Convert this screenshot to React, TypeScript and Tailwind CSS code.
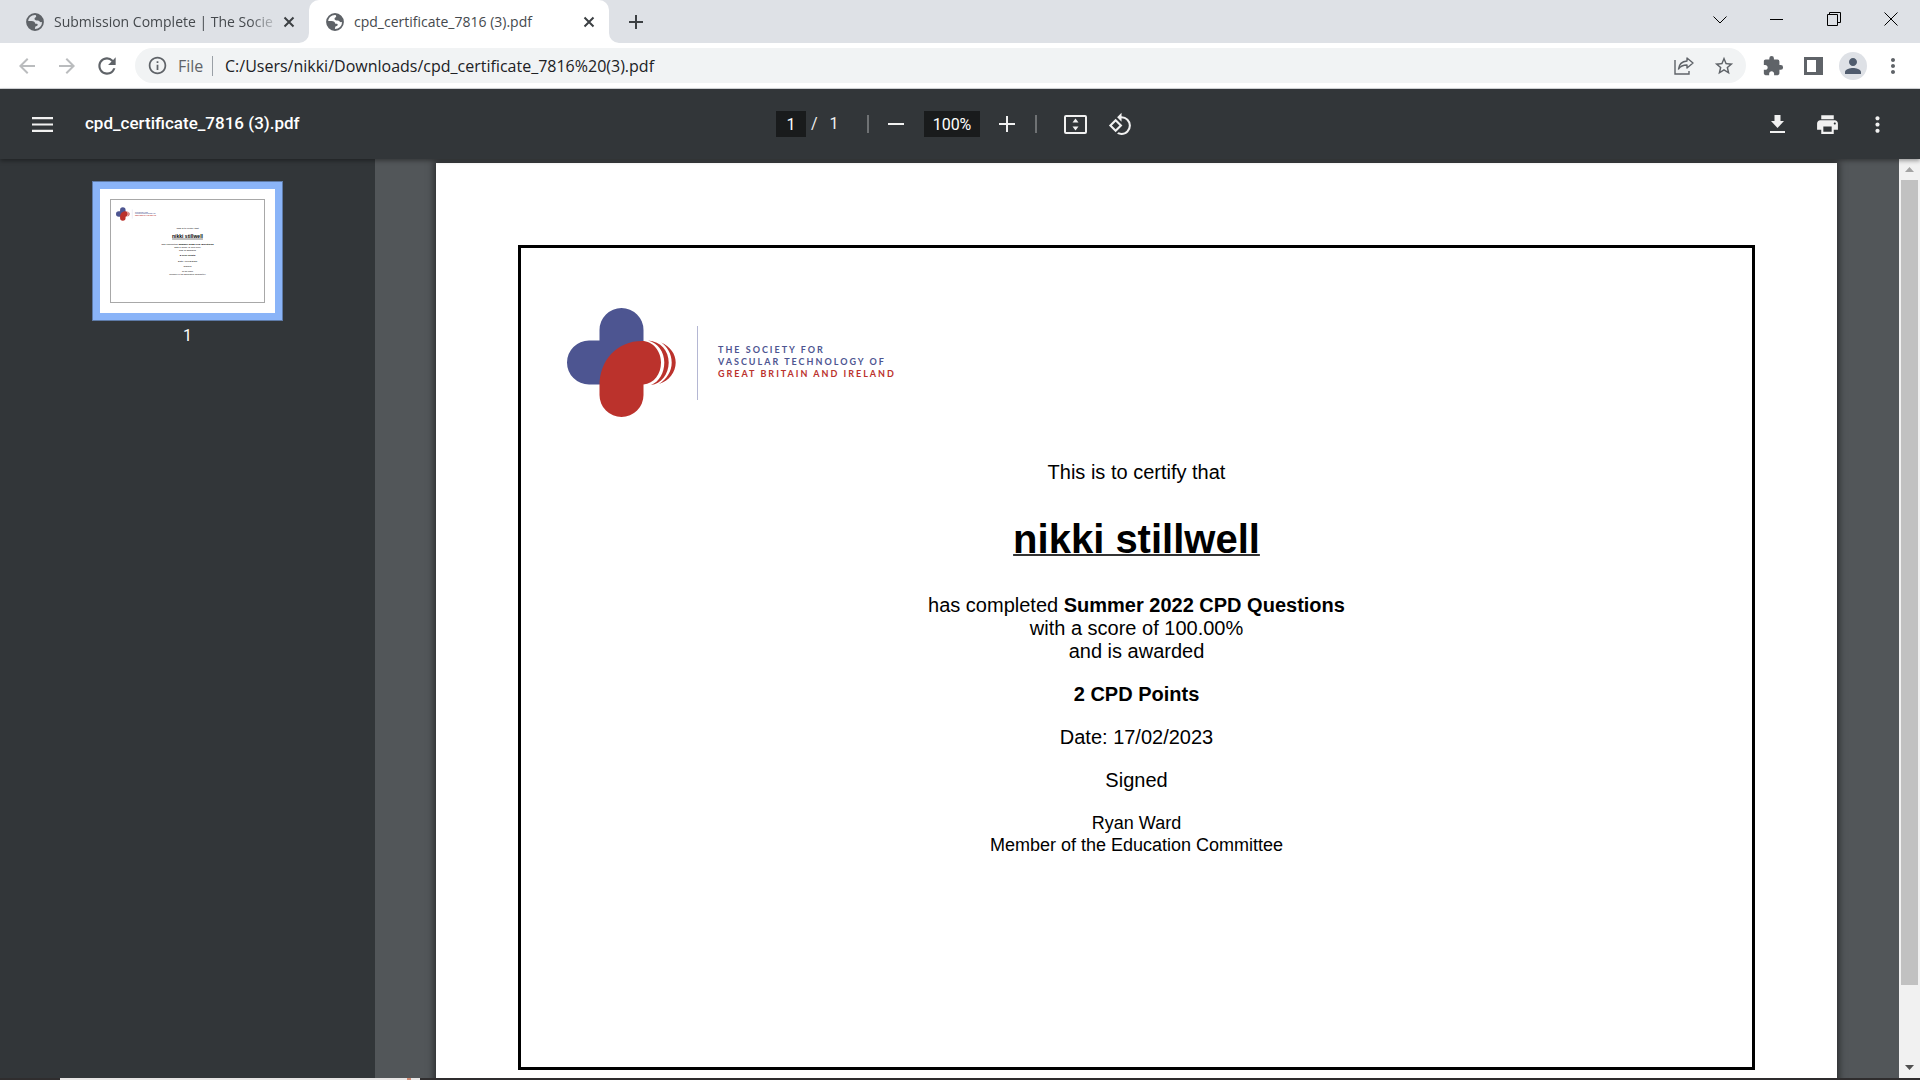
import type { ReactNode } from "react";
import {
  MdArrowBack,
  MdArrowForward,
  MdExtension,
  MdInfoOutline,
  MdMoreVert,
  MdPerson,
  MdPrint,
  MdRefresh,
  MdRotate90DegreesCcw,
  MdStarBorder,
} from "react-icons/md";

const tabs = [
  { title: "Submission Complete | The Socie", active: false },
  { title: "cpd_certificate_7816 (3).pdf", active: true },
];

const fileName = "cpd_certificate_7816 (3).pdf";

function IconButton({
  label,
  className = "",
  children,
}: {
  label: string;
  className?: string;
  children: ReactNode;
}) {
  return (
    <button
      type="button"
      aria-label={label}
      className={`flex h-9 w-9 shrink-0 items-center justify-center ${className}`}
    >
      {children}
    </button>
  );
}

/* ---------- Window frame ---------- */

function GlobeIcon() {
  return (
    <svg className="shrink-0" width="18" height="18" viewBox="0 0 18 18">
      <circle cx="9" cy="9" r="8" fill="none" stroke="#5f6368" strokeWidth="1.800" />
      <path
        fill="#5f6368"
        d="M9.500 1C14 1 17 4.500 17 8.500c-1.500 1-3 .8-3.600-.2-.6-1-1.800-.8-2.800-.8-1.300 0-2.400-.9-2-2.200.3-1 1.400-.8 1.600-1.800C10.300 2.600 9.500 2 9.500 1zM1 8h4.500c2.200 0 3.800 1.200 3.800 2.800h1.600c1 0 1 1.400.3 2-.6.500-1.800.4-2 1.200-.2 1-.2 2-.6 3C4.500 17 1 13.500 1 8z"
      />
    </svg>
  );
}

function CloseIcon() {
  return (
    <svg width="12" height="12" viewBox="0 0 12 12" stroke="#3c4043" strokeWidth="2">
      <path d="M1.500 1.500l9 9M10.500 1.500l-9 9" />
    </svg>
  );
}

function Tab({ title, active }: { title: string; active: boolean }) {
  return (
    <div
      role="tab"
      aria-selected={active}
      className={`relative flex h-full w-[300px] items-center pl-[17px] ${
        active ? "rounded-t-[10px] bg-white pr-3" : "pr-3"
      }`}
    >
      {active && (
        <>
          <svg className="absolute bottom-0 -left-2.5" width="10" height="10" viewBox="0 0 10 10" fill="#fff">
            <path d="M10 0v10H0A10 10 0 0 0 10 0z" />
          </svg>
          <svg className="absolute -right-2.5 bottom-0" width="10" height="10" viewBox="0 0 10 10" fill="#fff">
            <path d="M0 0v10h10A10 10 0 0 1 0 0z" />
          </svg>
        </>
      )}
      <GlobeIcon />
      <span
        className={`ml-2.5 min-w-0 flex-1 whitespace-nowrap text-sm text-[#45494d] ${
          active ? "" : "[mask-image:linear-gradient(to_right,black_86%,transparent)]"
        }`}
      >
        {title}
      </span>
      <button type="button" aria-label="Close tab" className="p-0.5">
        <CloseIcon />
      </button>
    </div>
  );
}

function TabStrip() {
  return (
    <div className="flex h-[43px] shrink-0 items-center bg-[#dee1e6]">
      <div role="tablist" className="flex h-full pl-[9px]">
        {tabs.map((tab) => (
          <Tab key={tab.title} {...tab} />
        ))}
      </div>
      <IconButton label="New tab" className="ml-[9px]">
        <svg width="16" height="16" viewBox="0 0 16 16" stroke="#3c4043" strokeWidth="2">
          <path d="M8 1v14M1 8h14" />
        </svg>
      </IconButton>
      <div className="ml-auto flex items-center pr-px pb-1.5 text-black">
        <button type="button" aria-label="Search tabs" className="flex w-[57px] justify-center">
          <svg width="14" height="14" viewBox="0 0 14 14" fill="none" stroke="currentColor">
            <path d="M.5 4.500L7 11l6.500-6.500" />
          </svg>
        </button>
        <button type="button" aria-label="Minimize" className="flex w-[57px] justify-center">
          <svg width="14" height="14" viewBox="0 0 14 14" fill="none" stroke="currentColor">
            <path d="M0 7.500h13" />
          </svg>
        </button>
        <button type="button" aria-label="Restore" className="flex w-[57px] justify-center">
          <svg width="14" height="14" viewBox="0 0 14 14" fill="none" stroke="currentColor">
            <path d="M.5 2.500h10v11H.5zM2.500 2.500v-2h11v10h-3" />
          </svg>
        </button>
        <button type="button" aria-label="Close" className="flex w-[57px] justify-center">
          <svg width="14" height="14" viewBox="0 0 14 14" fill="none" stroke="currentColor">
            <path d="M.5 .5l13 13M13.500 .5l-13 13" />
          </svg>
        </button>
      </div>
    </div>
  );
}

function AddressBar() {
  return (
    <div className="flex h-[46px] shrink-0 items-center border-b border-[#d5d7da] bg-white px-[9px] text-[#5f6368]">
      <IconButton label="Back" className="text-[#babcbe]">
        <MdArrowBack size={24} />
      </IconButton>
      <IconButton label="Forward" className="ml-1 text-[#babcbe]">
        <MdArrowForward size={24} />
      </IconButton>
      <IconButton label="Reload" className="ml-1">
        <MdRefresh size={26} />
      </IconButton>
      <div className="ml-2.5 flex h-[35px] flex-1 items-center rounded-full bg-[#f1f3f4] pr-1 pl-3">
        <MdInfoOutline size={21} />
        <span className="ml-2.5 w-[25px] text-base">File</span>
        <span className="ml-[9px] h-5 w-px bg-[#9aa0a6]" />
        <input
          aria-label="Address"
          defaultValue="C:/Users/nikki/Downloads/cpd_certificate_7816%20(3).pdf"
          className="ml-3 min-w-0 flex-1 bg-transparent text-base text-[#202124] outline-none"
        />
        <IconButton label="Share">
          <svg width="20" height="18" viewBox="0 0 20 18" fill="none" stroke="currentColor" strokeWidth="1.400">
            <path d="M1 3v14h14v-3" />
            <path d="M13 1l6 5-6 5V8C9 8 6.500 9 4.500 12 5 7.500 8 4.500 13 4z" strokeLinejoin="round" />
          </svg>
        </IconButton>
        <IconButton label="Bookmark this tab" className="ml-1">
          <MdStarBorder size={22} />
        </IconButton>
      </div>
      <IconButton label="Extensions" className="ml-[9px]">
        <MdExtension size={22} />
      </IconButton>
      <IconButton label="Side panel" className="ml-1">
        <svg width="19" height="18" viewBox="0 0 19 18" fill="currentColor">
          <path d="M0 0h19v18H0zM3 3v12h9V3z" fillRule="evenodd" />
        </svg>
      </IconButton>
      <IconButton label="Profile" className="ml-1">
        <span className="flex h-7 w-7 items-center justify-center rounded-full bg-[#dee1e6] text-[#4f5b6d]">
          <MdPerson size={24} />
        </span>
      </IconButton>
      <IconButton label="Customize and control" className="ml-1">
        <MdMoreVert size={24} />
      </IconButton>
    </div>
  );
}

/* ---------- PDF viewer toolbar ---------- */

function ViewerToolbar() {
  return (
    <header className="relative z-10 flex h-[70px] shrink-0 items-center bg-[#323639] font-[Roboto,sans-serif] text-base text-white shadow-[0_2px_4px_rgba(0,0,0,0.35)]">
      <div className="flex flex-1 items-center pl-6">
        <IconButton label="Menu">
          <svg width="21" height="15" viewBox="0 0 21 15" fill="#f1f1f1">
            <path d="M0 0h21v2.200H0zM0 6.400h21v2.200H0zM0 12.800h21V15H0z" />
          </svg>
        </IconButton>
        <h1 className="ml-[25px] text-[17px] font-medium">{fileName}</h1>
      </div>

      <div className="flex items-center pr-[5px] text-[#f1f1f1]">
        <input
          aria-label="Page number"
          defaultValue="1"
          className="h-[26px] w-[30px] bg-[#191b1c] text-center text-white outline-none"
        />
        <span className="w-[61px] pl-[5px] whitespace-pre">/{"   "}1</span>
        <span className="h-[18px] w-0.5 bg-[#6f7274]" />
        <IconButton label="Zoom out" className="ml-[9px]">
          <svg width="16" height="16" viewBox="0 0 16 16" stroke="currentColor" strokeWidth="2">
            <path d="M0 8h16" />
          </svg>
        </IconButton>
        <input
          aria-label="Zoom level"
          defaultValue="100%"
          className="ml-2.5 h-[26px] w-14 bg-[#191b1c] text-center text-white outline-none"
        />
        <IconButton label="Zoom in" className="ml-[9px]">
          <svg width="16" height="16" viewBox="0 0 16 16" stroke="currentColor" strokeWidth="2">
            <path d="M0 8h16M8 0v16" />
          </svg>
        </IconButton>
        <span className="ml-2.5 h-[18px] w-0.5 bg-[#6f7274]" />
        <IconButton label="Fit to page" className="ml-5">
          <svg width="23" height="19" viewBox="0 0 23 19">
            <rect x="1" y="1" width="21" height="17" rx="1" fill="none" stroke="currentColor" strokeWidth="2" />
            <path d="M11.500 3.500L14.500 7.500h-6zM11.500 15.500l3-4h-6z" fill="currentColor" />
          </svg>
        </IconButton>
        <IconButton label="Rotate counterclockwise" className="ml-[9px]">
          <MdRotate90DegreesCcw size={25} />
        </IconButton>
      </div>

      <div className="flex flex-1 items-center justify-end gap-3.5 pr-[25px] text-[#f1f1f1]">
        <IconButton label="Download">
          <svg width="15" height="18" viewBox="0 0 15 18" fill="currentColor">
            <path d="M4.500 0h6v6H14l-6.500 7L1 6h3.500zM0 16h15v2H0z" />
          </svg>
        </IconButton>
        <IconButton label="Print">
          <MdPrint size={25} />
        </IconButton>
        <IconButton label="More actions">
          <MdMoreVert size={25} />
        </IconButton>
      </div>
    </header>
  );
}

/* ---------- Certificate ---------- */

function LogoMark() {
  return (
    <>
      <path
        fill="#4d5591"
        d="M32.500 76.500H22a22 22 0 0 1 0-44h10.500V22a22 22 0 0 1 44 0v20L40 76.500z"
      />
      <path
        fill="#bb322c"
        d="M32.500 78C32.500 52 50 33 75 33c11 0 19 10 19 21.500s-7 21-17.500 22V87a22 22 0 0 1-44 0z"
      />
      <path
        fill="#bb322c"
        d="M81 32.500c13 1 20.700 10.500 20.700 22S94 76 84 77c8-3 13.300-12 13.300-22.500S91 35 81 32.500zM94 34.500c9 3.500 14.700 11.500 14.700 20C108.700 64 102 73 92 76c8-5 12.700-13 12.700-21.500S100 38 94 34.500z"
      />
    </>
  );
}

function Certificate() {
  return (
    <article className="mx-auto w-full max-w-[1401px] bg-white px-[82px] pt-[82px] pb-[84px] font-['Liberation_Sans',Arial,sans-serif] text-black shadow-[0_0_7px_2px_rgba(0,0,0,0.5)]">
      <div className="min-h-[825px] border-3 border-black pt-[60px]">
        <div className="flex items-center pl-[46px]">
          <svg width="109" height="109" viewBox="0 0 109 109" role="img" aria-label="Society for Vascular Technology">
            <LogoMark />
          </svg>
          <div className="ml-[21px] h-[74px] w-px bg-[#b4b7d3]" />
          <p className="ml-5 pb-0.5 font-[Lato,sans-serif] text-[9px] leading-3 font-bold tracking-[2px] text-[#4d5591]">
            THE SOCIETY FOR
            <br />
            VASCULAR TECHNOLOGY OF
            <br />
            <span className="text-[#bb322c]">GREAT BRITAIN AND IRELAND</span>
          </p>
        </div>

        <div className="mt-11 text-center text-[20px] leading-[23px]">
          <p>This is to certify that</p>
          <h2 className="my-8 text-[40px] leading-[46px] font-bold">
            <span className="underline decoration-[#333] decoration-2 underline-offset-1 [text-decoration-skip-ink:none]">
              nikki stillwell
            </span>
          </h2>
          <p>
            has completed <b>Summer 2022 CPD Questions</b>
            <br />
            with a score of 100.00%
            <br />
            and is awarded
          </p>
          <p className="mt-5 font-bold">2 CPD Points</p>
          <p className="mt-5">Date: 17/02/2023</p>
          <p className="mt-5">Signed</p>
          <p className="mt-5 text-[18px] leading-[22px]">
            Ryan Ward
            <br />
            Member of the Education Committee
          </p>
        </div>
      </div>
    </article>
  );
}

// Miniature of the page, drawn in page units and scaled down by the viewBox
function PageThumbnail() {
  return (
    <svg
      viewBox="0 0 1400 992"
      className="block w-full bg-white"
      fontFamily="Liberation Sans, Arial, sans-serif"
      fontSize="20"
      textAnchor="middle"
      aria-hidden="true"
    >
      <rect x="84" y="84" width="1232" height="824" fill="none" stroke="#a8a8a8" strokeWidth="8" />
      <g transform="translate(128 145)">
        <LogoMark />
        <path d="M130 18v74" stroke="#b4b7d3" strokeWidth="2" />
        <g fontFamily="Lato, sans-serif" fontSize="12" fontWeight="bold" textAnchor="start" fill="#4d5591">
          <text x="151" y="45">THE SOCIETY FOR</text>
          <text x="151" y="57">VASCULAR TECHNOLOGY OF</text>
          <text x="151" y="69" fill="#bb322c">GREAT BRITAIN AND IRELAND</text>
        </g>
      </g>
      <text x="700" y="316">This is to certify that</text>
      <text x="700" y="390" fontSize="40" fontWeight="bold" textDecoration="underline">nikki stillwell</text>
      <text x="700" y="449">
        has completed <tspan fontWeight="bold">Summer 2022 CPD Questions</tspan>
      </text>
      <text x="700" y="472">with a score of 100.00%</text>
      <text x="700" y="495">and is awarded</text>
      <text x="700" y="538" fontWeight="bold">2 CPD Points</text>
      <text x="700" y="581">Date: 17/02/2023</text>
      <text x="700" y="625">Signed</text>
      <text x="700" y="666" fontSize="18">Ryan Ward</text>
      <text x="700" y="688" fontSize="18">Member of the Education Committee</text>
    </svg>
  );
}

function Sidebar() {
  return (
    <aside className="flex w-[375px] shrink-0 flex-col items-center bg-[#323639] pt-[22px]">
      <button
        type="button"
        aria-label="Page 1"
        className="w-[191px] border border-[#5e7ba8] bg-[#8ab4f8] p-[7px]"
      >
        <PageThumbnail />
      </button>
      <span className="mt-[3px] font-[Roboto,sans-serif] text-base text-white">1</span>
    </aside>
  );
}

function Scrollbar() {
  return (
    <div className="flex w-[21px] shrink-0 flex-col items-center bg-[#f1f1f1]">
      <svg className="my-2 shrink-0" width="9" height="5" viewBox="0 0 9 5" fill="#a3a3a3">
        <path d="M4.500 0L9 5H0z" />
      </svg>
      <div className="w-[17px] flex-[805] bg-[#c1c1c1]" />
      <div className="flex-[72]" />
      <svg className="my-2 shrink-0" width="9" height="5" viewBox="0 0 9 5" fill="#505050">
        <path d="M4.500 5L0 0h9z" />
      </svg>
    </div>
  );
}

export default function App() {
  return (
    <div className="flex h-screen flex-col overflow-hidden font-['Open_Sans','Noto_Sans',sans-serif]">
      <TabStrip />
      <AddressBar />
      <ViewerToolbar />
      <div className="flex min-h-0 flex-1">
        <Sidebar />
        <main className="min-w-0 flex-1 overflow-hidden bg-[#525659] pt-1 pr-px">
          <Certificate />
        </main>
        <Scrollbar />
      </div>
      {/* Sliver of the desktop taskbar */}
      <div className="flex h-0.5 shrink-0 bg-[#2f2d2e] pl-[60px]">
        <div className="w-[347px] bg-[#e8e6e6]" />
        <div className="w-1 bg-[#cf8a73]" />
        <div className="w-[9px] bg-[#e8e6e6]" />
      </div>
    </div>
  );
}
